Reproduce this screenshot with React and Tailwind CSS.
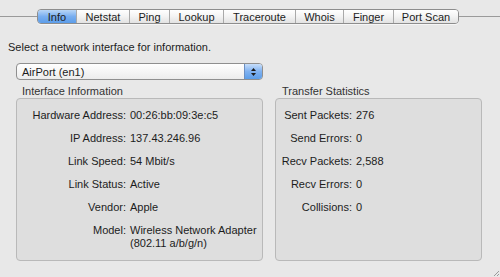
import React from "react";

const tabs = [
  { name: "Info", w: "w-[38px]", active: true },
  { name: "Netstat", w: "w-[53px]" },
  { name: "Ping", w: "w-[40px]" },
  { name: "Lookup", w: "w-[54px]" },
  { name: "Traceroute", w: "w-[72px]" },
  { name: "Whois", w: "w-[48px]" },
  { name: "Finger", w: "w-[50px]" },
  { name: "Port Scan", w: "w-[65px]" },
];

const iface = [
  ["Hardware Address:", "00:26:bb:09:3e:c5"],
  ["IP Address:", "137.43.246.96"],
  ["Link Speed:", "54 Mbit/s"],
  ["Link Status:", "Active"],
  ["Vendor:", "Apple"],
  ["Model:", "Wireless Network Adapter", "(802.11 a/b/g/n)"],
];

const stats = [
  ["Sent Packets:", "276"],
  ["Send Errors:", "0"],
  ["Recv Packets:", "2,588"],
  ["Recv Errors:", "0"],
  ["Collisions:", "0"],
];

const Row = ({ label, value, extra, labelW }) => (
  <div className="flex h-[23px] items-start">
    <span className={`${labelW} shrink-0 text-right`}>{label}</span>
    <span className="ml-[4px] leading-[14px]">
      {value}
      {extra && <span className="block leading-[13px]">{extra}</span>}
    </span>
  </div>
);

const App = () => {
  return (
    <div
      className="relative w-[500px] h-[277px] bg-[#e8e8e8] text-[11px] leading-[14px] text-[#1c1c1c] overflow-hidden"
      style={{ fontFamily: '"Liberation Sans", Arial, sans-serif' }}
    >
      {/* tab strip */}
      <div className="flex items-center pt-[9px]">
        <div className="w-[37px] h-px bg-[#9a9a9a]" />
        <div className="flex h-[15px] rounded-[4px] border border-[#8d8d8d] overflow-hidden shadow-[0_1px_0_rgba(255,255,255,0.6)]">
          {tabs.map((t, i) => (
            <div
              key={t.name}
              className={`${t.w} flex items-center justify-center ${
                i > 0 ? "border-l border-[#a9a9a9]" : ""
              } ${
                t.active
                  ? "bg-gradient-to-b from-[#b9d6f6] via-[#78aef0] to-[#5c9de9]"
                  : "bg-gradient-to-b from-[#ffffff] via-[#f3f3f3] to-[#e2e2e2]"
              }`}
            >
              {t.name}
            </div>
          ))}
        </div>
        <div className="flex-1 h-px bg-[#9a9a9a]" />
      </div>

      <div className="px-[8px] mt-[16px]">Select a network interface for information.</div>

      {/* popup */}
      <div className="ml-[16px] mt-[9px] w-[247px] h-[17px] flex rounded-[4px] border border-[#8f8f8f] overflow-hidden bg-gradient-to-b from-[#ffffff] to-[#ececec]">
        <div className="flex-1 pl-[5px] flex items-center">AirPort (en1)</div>
        <div className="w-[18px] border-l border-[#6c8fc2] bg-gradient-to-b from-[#c7defa] via-[#7fb1f0] to-[#5b9de8] flex flex-col items-center justify-center gap-[2px]">
          <svg width="5" height="3" viewBox="0 0 5 3">
            <path d="M0 3 L2.5 0 L5 3 Z" fill="#1b1b1b" />
          </svg>
          <svg width="5" height="3" viewBox="0 0 5 3">
            <path d="M0 0 L2.5 3 L5 0 Z" fill="#1b1b1b" />
          </svg>
        </div>
      </div>

      {/* groups */}
      <div className="flex gap-[12px] ml-[16px] mt-[4px]">
        <div className="w-[247px]">
          <div className="pl-[6px] h-[14px] text-[#333]">Interface Information</div>
          <div className="h-[163px] rounded-[4px] border border-[#b9b9b9] bg-[#dedede] pt-[9px]">
            {iface.map(([l, v, e]) => (
              <Row key={l} label={l} value={v} extra={e} labelW="w-[109px]" />
            ))}
          </div>
        </div>
        <div className="w-[207px]">
          <div className="pl-[7px] h-[14px] text-[#333]">Transfer Statistics</div>
          <div className="h-[163px] rounded-[4px] border border-[#b9b9b9] bg-[#dedede] pt-[9px]">
            {stats.map(([l, v]) => (
              <Row key={l} label={l} value={v} labelW="w-[76px]" />
            ))}
          </div>
        </div>
      </div>

      {/* resize grip */}
      <svg className="absolute right-[1px] bottom-[1px]" width="6" height="6" viewBox="0 0 6 6">
        <path d="M1 6 L6 1 M4 6 L6 4" stroke="#9a9a9a" strokeWidth="1" />
      </svg>
    </div>
  );
};

export default App;
